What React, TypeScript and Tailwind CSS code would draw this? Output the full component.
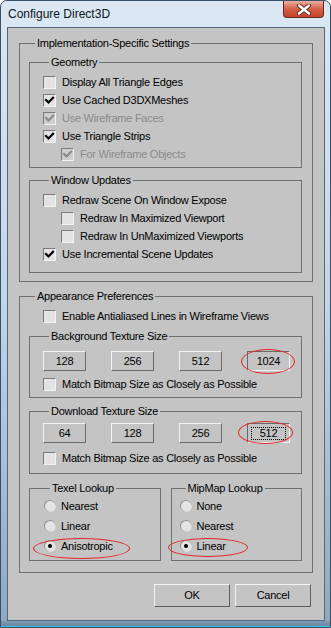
import type { ReactNode } from "react";

// classic 3d checkbox, 13px
const CheckBox = ({ checked, disabled }: { checked?: boolean; disabled?: boolean }) => {
  return (
    <span className={`flex w-[13px] h-[13px] shrink-0 border border-t-[#7c7c7c] border-l-[#7c7c7c] border-b-[#f2f2f2] border-r-[#f2f2f2] ${disabled ? "bg-[#cdcdcd]" : "bg-[#e3e3e3]"}`}>
      {checked && (
        <svg width="11" height="11" viewBox="0 0 11 11">
          <polyline points="2,5 4.5,7.5 9,2.8" fill="none" stroke={disabled ? "#8a8a8a" : "#000"} strokeWidth="2.2" strokeLinecap="square" />
        </svg>
      )}
    </span>
  );
};

const Radio = ({ checked }: { checked?: boolean }) => {
  return (
    <span className="flex w-[12px] h-[12px] shrink-0 rounded-full bg-linear-to-br from-[#6e6e6e] to-[#ffffff] items-center justify-center">
      <span className="flex w-[10px] h-[10px] rounded-full bg-[#e4e4e4] items-center justify-center">
        {checked && <span className="w-[4px] h-[4px] rounded-full bg-black"></span>}
      </span>
    </span>
  );
};

const CheckRow = ({ label, checked, disabled, indent }: { label: string; checked?: boolean; disabled?: boolean; indent?: boolean }) => {
  return (
    <div className={`h-[18px] flex items-center gap-[6px] ${indent ? "pl-[18px]" : ""}`}>
      <CheckBox checked={checked} disabled={disabled} />
      <span className={disabled ? "text-[#8a8a8a]" : "text-black"}>{label}</span>
    </div>
  );
};

const RadioRow = ({ label, checked, mark }: { label: string; checked?: boolean; mark?: string }) => {
  return (
    <div className="relative h-[20px] flex items-center gap-[5px]">
      <Radio checked={checked} />
      <span>{label}</span>
      {mark && <span className={`absolute pointer-events-none border border-[#e4282a] rounded-[50%] ${mark}`}></span>}
    </div>
  );
};

const Group = ({ label, className, children }: { label: string; className?: string; children: ReactNode }) => {
  return (
    <fieldset className={`border border-[#707070] ${className ?? ""}`}>
      <legend className="ml-[6px] px-[2px] leading-[14px]">{label}</legend>
      {children}
    </fieldset>
  );
};

const SizeButton = ({ label, down, focus, mark }: { label: string; down?: boolean; focus?: boolean; mark?: string }) => {
  return (
    <div className="relative w-[43px] h-[20px]">
      <div className={`w-full h-full flex items-center justify-center border ${down ? "border-t-[#6a6a6a] border-l-[#6a6a6a] border-b-[#f4f4f4] border-r-[#f4f4f4]" : "border-t-[#f4f4f4] border-l-[#f4f4f4] border-b-[#6a6a6a] border-r-[#6a6a6a]"}`}>
        {focus ? (
          <span className="w-[35px] h-[13px] flex items-center justify-center border border-dotted border-black">{label}</span>
        ) : (
          <span>{label}</span>
        )}
      </div>
      {mark && <span className={`absolute pointer-events-none border border-[#e4282a] rounded-[50%] ${mark}`}></span>}
    </div>
  );
};

const DialogButton = ({ label }: { label: string }) => {
  return (
    <div className="w-[76px] h-[23px] flex items-center justify-center border border-t-[#f4f4f4] border-l-[#f4f4f4] border-b-[#5e5e5e] border-r-[#5e5e5e]">
      {label}
    </div>
  );
};

const App = () => {
  return (
    <div className="w-[331px] h-[628px] flex flex-col overflow-hidden rounded-t-[7px] border border-[#3b4f66] bg-linear-to-b from-[#dbe8f4] via-[#c0d4e7] to-[#8ea8c1] font-['Liberation_Sans',Arial,sans-serif] text-[11px] tracking-[-0.25px] text-black">
      {/* title bar */}
      <div className="h-[26px] shrink-0 flex justify-between items-start">
        <div className="h-[26px] pl-[7px] flex items-center text-[12px] tracking-normal text-[#0b1620]">Configure Direct3D</div>
        <div className="mr-[6px] w-[41px] h-[17px] rounded-b-[4px] border border-t-0 border-[#6d2618] bg-linear-to-b from-[#eab0a2] via-[#d35f48] to-[#c4432b] flex items-center justify-center">
          <svg width="16" height="11" viewBox="0 0 16 11">
            <path d="M3 1.5 L13 9.5 M13 1.5 L3 9.5" stroke="#6a2a1e" strokeWidth="4.4" strokeLinecap="round" />
            <path d="M3 1.5 L13 9.5 M13 1.5 L3 9.5" stroke="#ffffff" strokeWidth="2.4" strokeLinecap="round" />
          </svg>
        </div>
      </div>

      {/* client area */}
      <div className="ml-[6px] mr-[5px] h-[594px] shrink-0 border border-[#55677a] bg-[#c4c4c4] pt-[8px] px-[11px] flex flex-col">
        <Group label="Implementation-Specific Settings" className="pt-[5px] pb-[8px] pl-[9px] pr-[10px]">
          <Group label="Geometry" className="pt-[4px] pb-[4px] pl-[13px]">
            <CheckRow label="Display All Triangle Edges" />
            <CheckRow label="Use Cached D3DXMeshes" checked />
            <CheckRow label="Use Wireframe Faces" checked disabled />
            <CheckRow label="Use Triangle Strips" checked />
            <CheckRow label="For Wireframe Objects" checked disabled indent />
          </Group>
          <Group label="Window Updates" className="mt-[5px] pt-[4px] pb-[9px] pl-[13px]">
            <CheckRow label="Redraw Scene On Window Expose" />
            <CheckRow label="Redraw In Maximized Viewport" indent />
            <CheckRow label="Redraw In UnMaximized Viewports" indent />
            <CheckRow label="Use Incremental Scene Updates" checked />
          </Group>
        </Group>

        <Group label="Appearance Preferences" className="mt-[7px] pt-[4px] pb-[11px] pl-[9px] pr-[10px]">
          <div className="pl-[14px]">
            <CheckRow label="Enable Antialiased Lines in Wireframe Views" />
          </div>

          <Group label="Background Texture Size" className="mt-[4px] pt-[8px] pb-[4px] pl-[13px]">
            <div className="flex gap-[25px]">
              <SizeButton label="128" />
              <SizeButton label="256" />
              <SizeButton label="512" />
              <SizeButton label="1024" down mark="left-[-6px] top-[-2px] w-[54px] h-[25px]" />
            </div>
            <div className="mt-[4px]">
              <CheckRow label="Match Bitmap Size as Closely as Possible" />
            </div>
          </Group>

          <Group label="Download Texture Size" className="mt-[6px] pt-[5px] pb-[6px] pl-[13px]">
            <div className="flex gap-[25px]">
              <SizeButton label="64" />
              <SizeButton label="128" />
              <SizeButton label="256" />
              <SizeButton label="512" down focus mark="left-[-9px] top-[-2px] w-[55px] h-[23px]" />
            </div>
            <div className="mt-[6px]">
              <CheckRow label="Match Bitmap Size as Closely as Possible" />
            </div>
          </Group>

          <div className="mt-[7px] grid grid-cols-2 gap-[10px]">
            <Group label="Texel Lookup" className="pt-[1px] pb-[4px] pl-[14px]">
              <RadioRow label="Nearest" />
              <RadioRow label="Linear" />
              <RadioRow label="Anisotropic" checked mark="left-[-11px] top-[2px] w-[97px] h-[21px]" />
            </Group>
            <Group label="MipMap Lookup" className="pt-[1px] pb-[4px] pl-[8px]">
              <RadioRow label="None" />
              <RadioRow label="Nearest" />
              <RadioRow label="Linear" checked mark="left-[-12px] top-[2px] w-[80px] h-[19px]" />
            </Group>
          </div>
        </Group>

        {/* ok / cancel */}
        <div className="mt-[11px] flex justify-end gap-[5px] pr-[2px]">
          <DialogButton label="OK" />
          <DialogButton label="Cancel" />
        </div>
      </div>

      {/* bottom frame */}
      <div className="h-[6px] shrink-0 bg-linear-to-b from-[#7f9ab4] to-[#6a86a2] border-b border-[#2cc4f2]"></div>
    </div>
  );
};

export default App;
